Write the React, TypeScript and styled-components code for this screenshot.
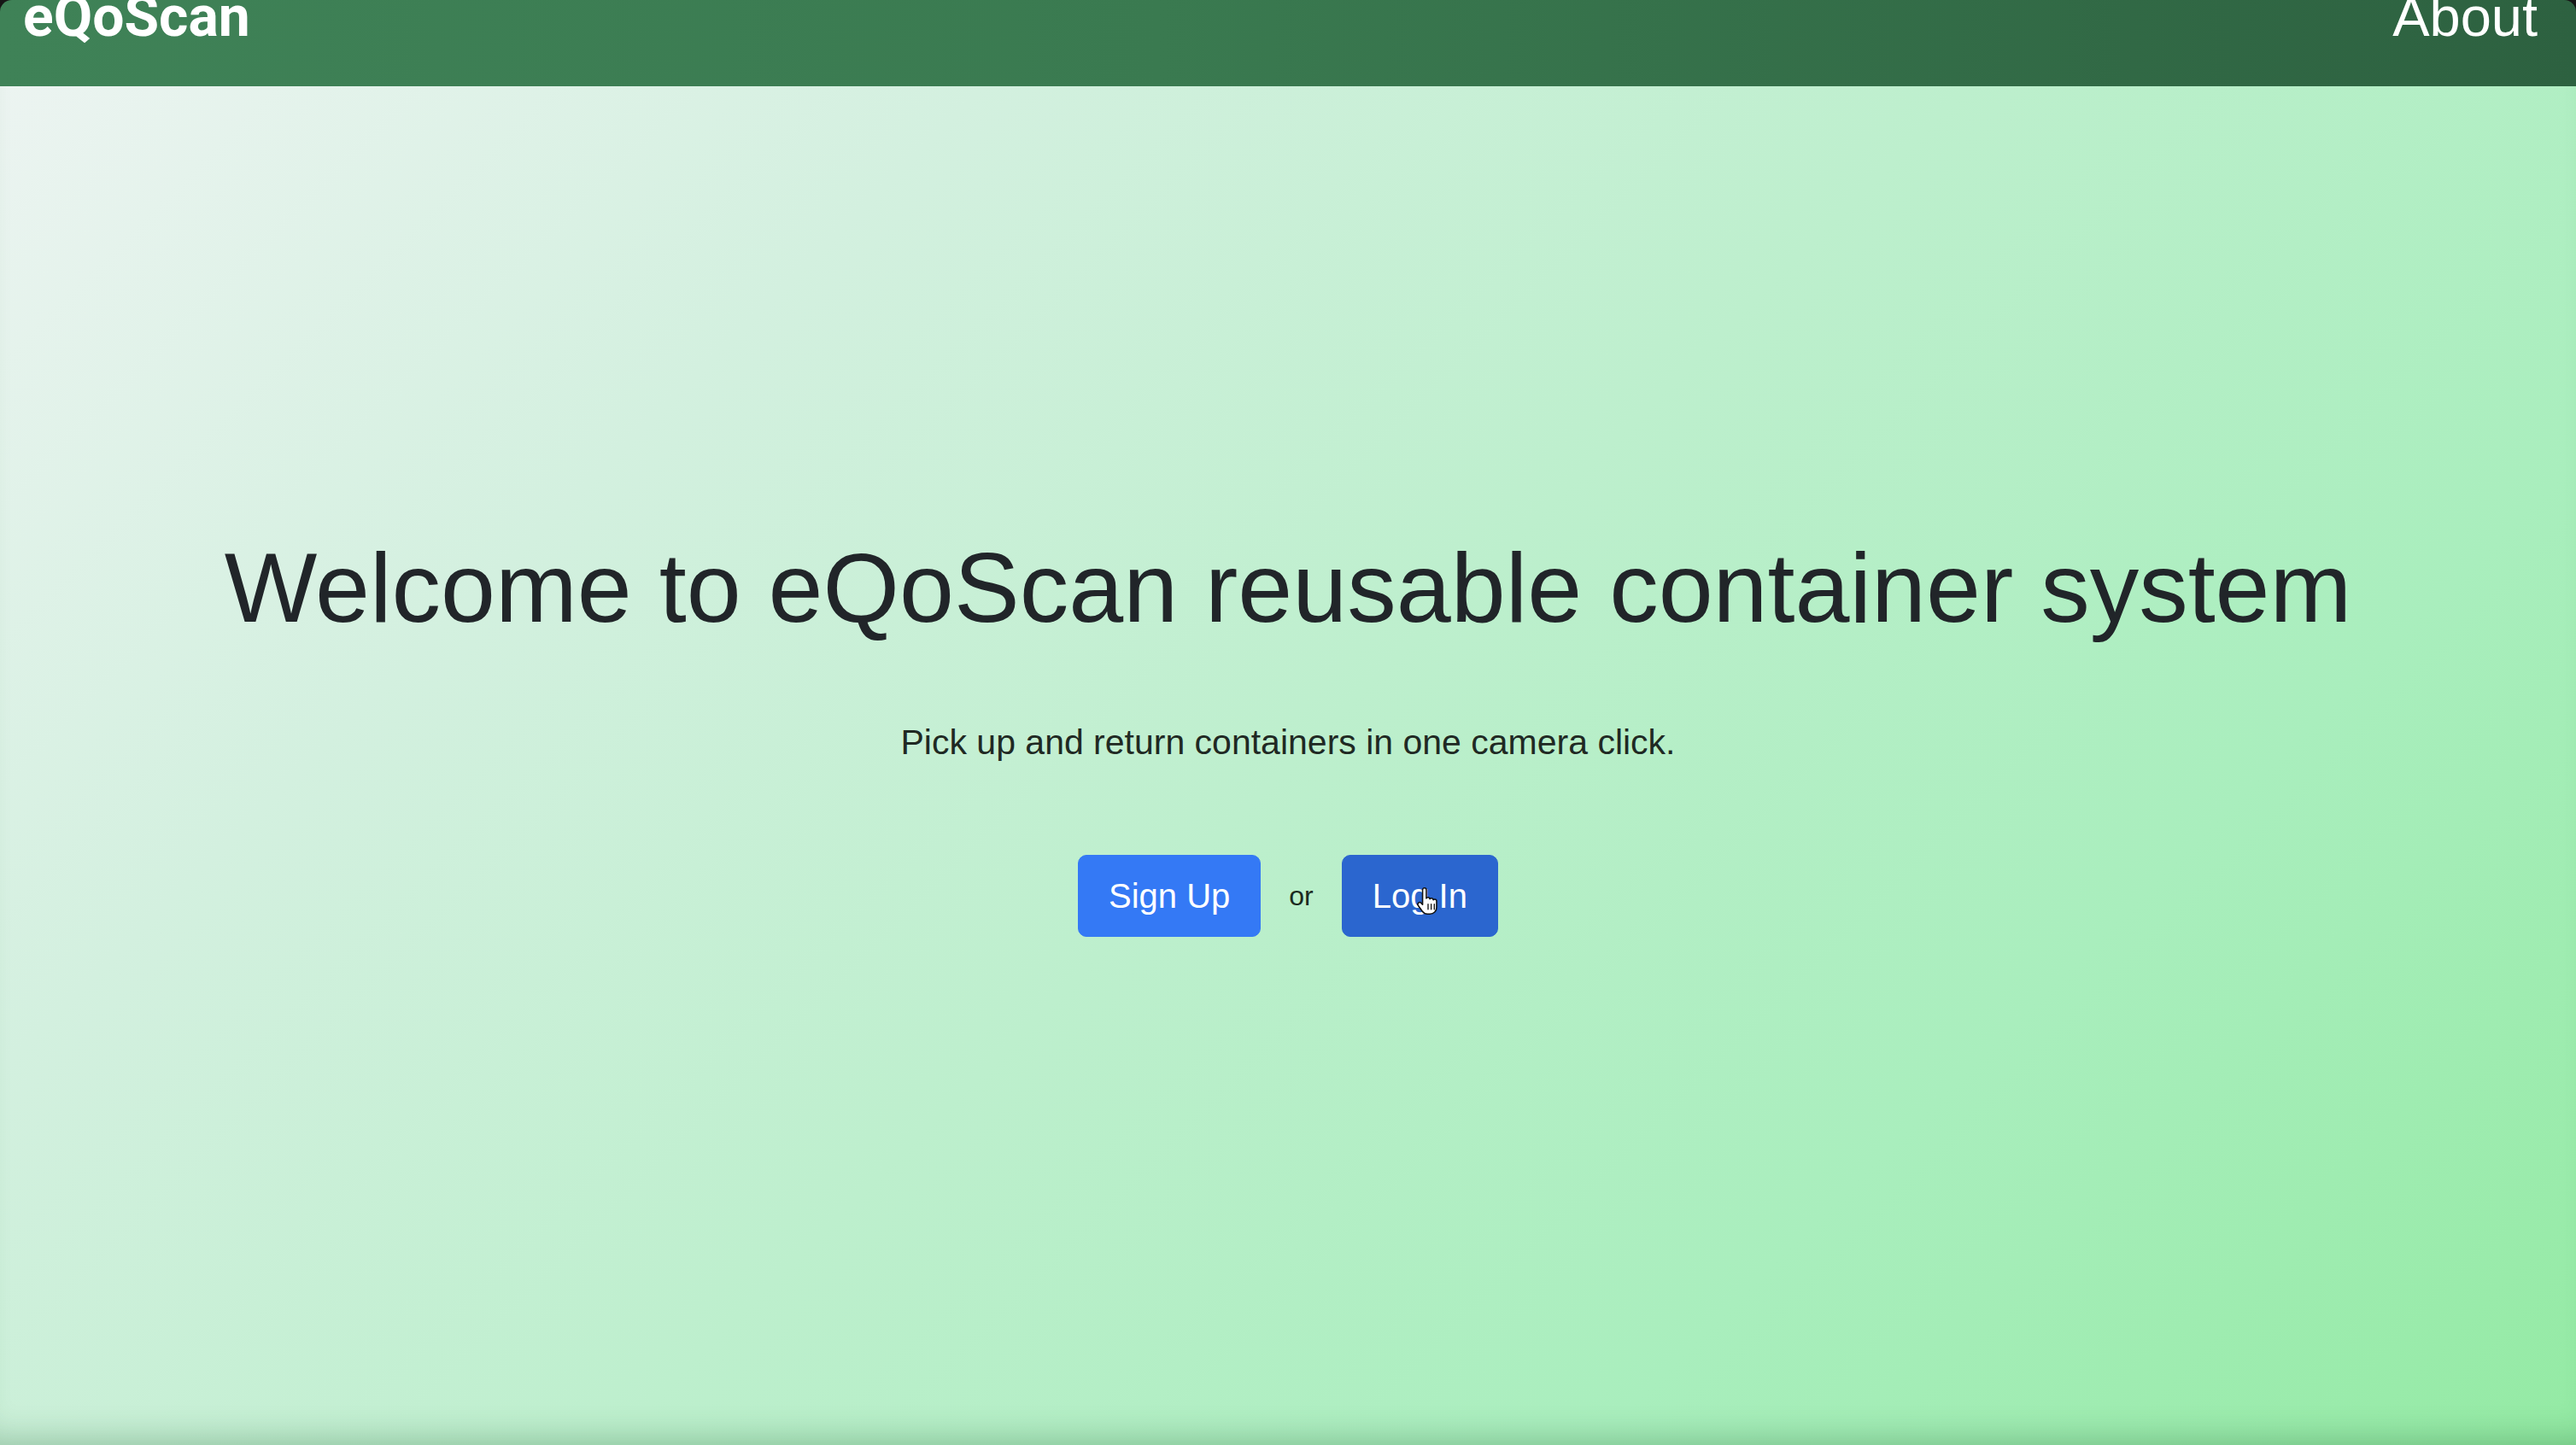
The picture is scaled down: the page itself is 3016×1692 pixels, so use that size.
import * as React from 'react';
import styled, { createGlobalStyle } from 'styled-components';

const GlobalStyle = createGlobalStyle`
  html,
  body {
    margin: 0;
    padding: 0;
    background: #161616;
  }

  #root {
    min-height: 100vh;
  }
`;

const Page = styled.div`
  display: flex;
  flex-direction: column;
  min-height: 100vh;
  border-radius: 14px 14px 0 0;
  overflow: hidden;
  font-family: 'Liberation Sans', Arial, sans-serif;
`;

const NavBar = styled.header`
  display: flex;
  justify-content: space-between;
  align-items: flex-start;
  height: 101px;
  padding: 0 45px 0 27px;
  box-sizing: border-box;
  background: linear-gradient(90deg, #3f8257 0%, #3a7a50 45%, #2d6140 100%);
  color: #fff;
`;

const Brand = styled.a`
  font-family: Roboto, 'Liberation Sans', sans-serif;
  font-weight: 700;
  font-size: 66px;
  line-height: 39px;
  color: #fff;
  text-decoration: none;
`;

const NavLink = styled.a`
  font-size: 65px;
  line-height: 39px;
  color: #fff;
  text-decoration: none;
`;

const Main = styled.main`
  flex: 1;
  display: flex;
  flex-direction: column;
  align-items: center;
  padding-top: 518px;
  background: linear-gradient(
    135deg,
    #ecf4f1 0%,
    #d3f0df 25%,
    #bdefcd 50%,
    #a9eebd 75%,
    #94eaa4 100%
  );
  box-shadow: inset 0 -34px 36px -26px rgba(20, 90, 40, 0.28);
  color: #212529;
`;

const Title = styled.h1`
  margin: 0;
  font-size: 115px;
  font-weight: 400;
  line-height: 1.2;
  text-align: center;
`;

const Lead = styled.p`
  margin: 82px 0 0;
  font-size: 41px;
  line-height: 1.5;
  color: #1f2923;
`;

const Actions = styled.div`
  display: flex;
  align-items: center;
  gap: 33px;
  margin-top: 100px;
`;

const Button = styled.button<{ $active?: boolean }>`
  position: relative;
  padding: 17px 35px;
  border: 1px solid ${p => (p.$active ? '#2b66cf' : '#3479f5')};
  border-radius: 10px;
  background: ${p => (p.$active ? '#2b66cf' : '#3479f5')};
  color: #fff;
  font-family: 'Liberation Sans', Arial, sans-serif;
  font-size: 40px;
  line-height: 60px;
  cursor: pointer;
`;

const Or = styled.span`
  font-size: 32px;
  line-height: 1.5;
  color: #1b2a20;
`;

const Cursor = styled.svg`
  position: absolute;
  left: 85px;
  top: 36px;
  width: 30px;
  height: 34px;
  pointer-events: none;
`;

const HandCursor = () => (
  <Cursor viewBox="0 0 24 28">
    <path
      d="M8.5 1.5c1 0 1.8.8 1.8 1.8v8.2c.3-.6.9-1 1.6-1 1 0 1.7.7 1.8 1.6.3-.5.9-.8 1.5-.8 1 0 1.7.7 1.8 1.6.3-.4.8-.6 1.4-.6 1 0 1.8.8 1.8 1.8v6.2c0 3.6-2.8 6.2-6.4 6.2h-2.4c-2.2 0-3.8-.9-5-2.6l-4-5.6c-.6-.9-.4-2 .4-2.6.8-.6 1.9-.5 2.6.3l1.3 1.5V3.3c0-1 .8-1.8 1.8-1.8z"
      fill="#fff"
      stroke="#111"
      strokeWidth="1.3"
      strokeLinejoin="round"
    />
    <path d="M12 17v5M15 17v5M18 17v5" stroke="#111" strokeWidth="1.1" strokeLinecap="round" />
  </Cursor>
);

export default function App() {
  return (
    <>
      <GlobalStyle />
      <Page>
        <NavBar>
          <Brand href="#">eQoScan</Brand>
          <NavLink href="#">About</NavLink>
        </NavBar>
        <Main>
          <Title>Welcome to eQoScan reusable container system</Title>
          <Lead>Pick up and return containers in one camera click.</Lead>
          <Actions>
            <Button>Sign Up</Button>
            <Or>or</Or>
            <Button $active>
              Log In
              <HandCursor />
            </Button>
          </Actions>
        </Main>
      </Page>
    </>
  );
}
